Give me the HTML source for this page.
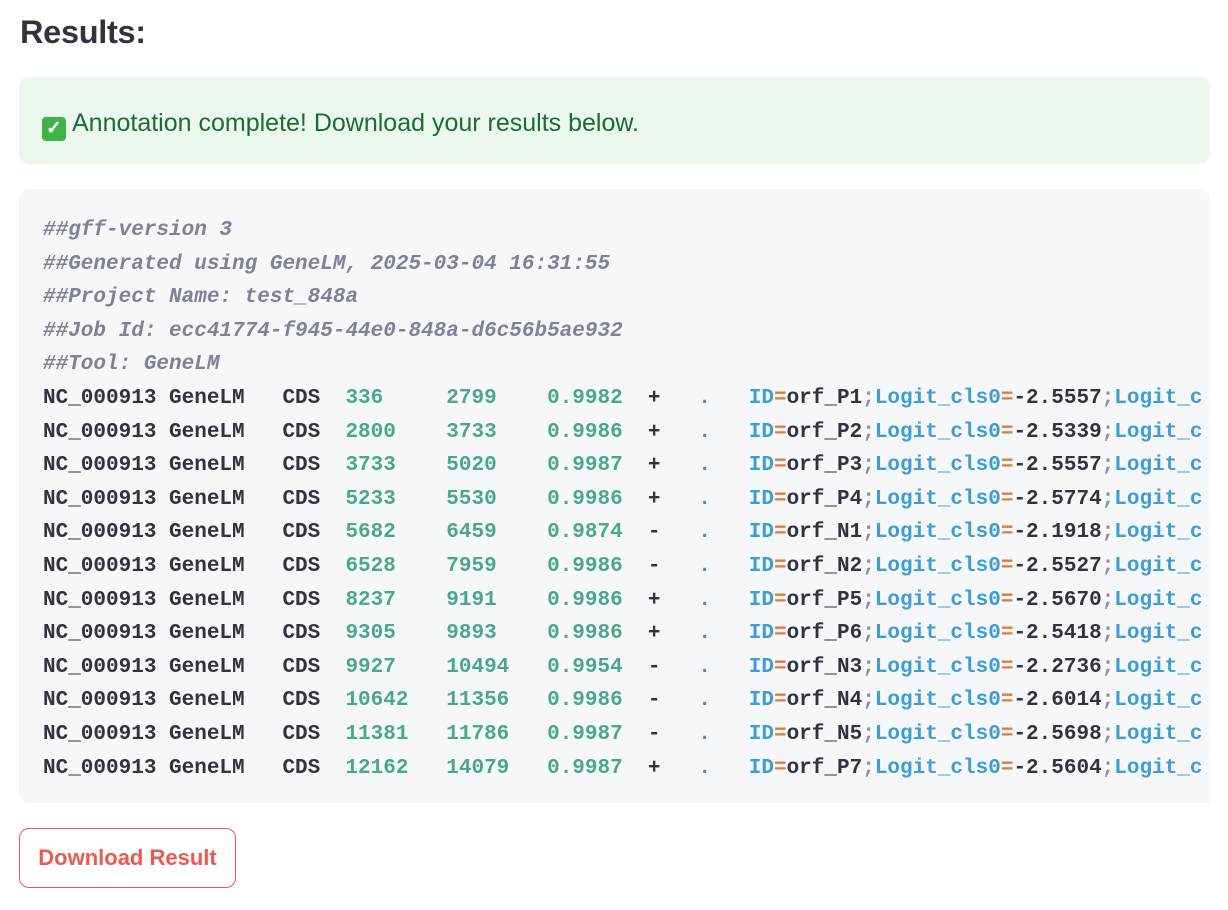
<!DOCTYPE html>
<html><head><meta charset="utf-8"><style>
body{margin:0;background:#fff;width:1228px;height:910px;overflow:hidden;font-family:"Liberation Sans",sans-serif}
h2{position:absolute;left:20px;top:14px;margin:0;font-size:32.5px;font-weight:bold;color:#31333f;letter-spacing:-0.3px}
.ok{position:absolute;left:19px;top:77px;width:1191px;height:87px;background:#ecf7ee;border-radius:10px}
.msg{position:absolute;left:23px;top:32px;font-size:25px;color:#1d6b35;white-space:nowrap;line-height:28px}
.ck{display:inline-block;width:24px;height:24px;background:#3fb34a;border-radius:4px;color:#fff;font-size:19px;line-height:24px;text-align:center;vertical-align:-3px;margin-right:6px;font-weight:bold}
.code{position:absolute;left:19px;top:189px;width:1191px;height:614px;background:#f6f7f9;border-radius:10px 10px 0 10px}
.in{position:absolute;left:24px;top:25px;width:1159px;height:580px;overflow:hidden}
pre{margin:0;font-family:"Liberation Mono",monospace;font-size:21px;line-height:33.6px;font-weight:bold;color:#31333f}
.c{color:#7e8296;font-style:italic}
.n{color:#4aa88a}.k{color:#3d9dd6}.e{color:#e07b39}.s{color:#8a8fa0}.d{color:#3d8fd6}
.btn{position:absolute;left:19px;top:828px;width:215px;height:58px;border:1px solid #ea5a50;border-radius:10px;color:#ea5a50;font-size:22px;font-weight:bold;text-align:center;line-height:58px}
</style></head><body>
<h2>Results:</h2>
<div class="ok"><div class="msg"><span class="ck">✓</span>Annotation complete! Download your results below.</div></div>
<div class="code"><div class="in"><pre><span class="c">##gff-version 3
##Generated using GeneLM, 2025-03-04 16:31:55
##Project Name: test_848a
##Job Id: ecc41774-f945-44e0-848a-d6c56b5ae932
##Tool: GeneLM</span>
NC_000913 GeneLM   CDS  <span class="n">336     2799    0.9982</span>  +   <span class="d">.</span>   <span class="k">ID</span><span class="e">=</span>orf_P1<span class="s">;</span><span class="k">Logit_cls0</span><span class="e">=</span>-2.5557<span class="s">;</span><span class="k">Logit_cls1</span>
NC_000913 GeneLM   CDS  <span class="n">2800    3733    0.9986</span>  +   <span class="d">.</span>   <span class="k">ID</span><span class="e">=</span>orf_P2<span class="s">;</span><span class="k">Logit_cls0</span><span class="e">=</span>-2.5339<span class="s">;</span><span class="k">Logit_cls1</span>
NC_000913 GeneLM   CDS  <span class="n">3733    5020    0.9987</span>  +   <span class="d">.</span>   <span class="k">ID</span><span class="e">=</span>orf_P3<span class="s">;</span><span class="k">Logit_cls0</span><span class="e">=</span>-2.5557<span class="s">;</span><span class="k">Logit_cls1</span>
NC_000913 GeneLM   CDS  <span class="n">5233    5530    0.9986</span>  +   <span class="d">.</span>   <span class="k">ID</span><span class="e">=</span>orf_P4<span class="s">;</span><span class="k">Logit_cls0</span><span class="e">=</span>-2.5774<span class="s">;</span><span class="k">Logit_cls1</span>
NC_000913 GeneLM   CDS  <span class="n">5682    6459    0.9874</span>  -   <span class="d">.</span>   <span class="k">ID</span><span class="e">=</span>orf_N1<span class="s">;</span><span class="k">Logit_cls0</span><span class="e">=</span>-2.1918<span class="s">;</span><span class="k">Logit_cls1</span>
NC_000913 GeneLM   CDS  <span class="n">6528    7959    0.9986</span>  -   <span class="d">.</span>   <span class="k">ID</span><span class="e">=</span>orf_N2<span class="s">;</span><span class="k">Logit_cls0</span><span class="e">=</span>-2.5527<span class="s">;</span><span class="k">Logit_cls1</span>
NC_000913 GeneLM   CDS  <span class="n">8237    9191    0.9986</span>  +   <span class="d">.</span>   <span class="k">ID</span><span class="e">=</span>orf_P5<span class="s">;</span><span class="k">Logit_cls0</span><span class="e">=</span>-2.5670<span class="s">;</span><span class="k">Logit_cls1</span>
NC_000913 GeneLM   CDS  <span class="n">9305    9893    0.9986</span>  +   <span class="d">.</span>   <span class="k">ID</span><span class="e">=</span>orf_P6<span class="s">;</span><span class="k">Logit_cls0</span><span class="e">=</span>-2.5418<span class="s">;</span><span class="k">Logit_cls1</span>
NC_000913 GeneLM   CDS  <span class="n">9927    10494   0.9954</span>  -   <span class="d">.</span>   <span class="k">ID</span><span class="e">=</span>orf_N3<span class="s">;</span><span class="k">Logit_cls0</span><span class="e">=</span>-2.2736<span class="s">;</span><span class="k">Logit_cls1</span>
NC_000913 GeneLM   CDS  <span class="n">10642   11356   0.9986</span>  -   <span class="d">.</span>   <span class="k">ID</span><span class="e">=</span>orf_N4<span class="s">;</span><span class="k">Logit_cls0</span><span class="e">=</span>-2.6014<span class="s">;</span><span class="k">Logit_cls1</span>
NC_000913 GeneLM   CDS  <span class="n">11381   11786   0.9987</span>  -   <span class="d">.</span>   <span class="k">ID</span><span class="e">=</span>orf_N5<span class="s">;</span><span class="k">Logit_cls0</span><span class="e">=</span>-2.5698<span class="s">;</span><span class="k">Logit_cls1</span>
NC_000913 GeneLM   CDS  <span class="n">12162   14079   0.9987</span>  +   <span class="d">.</span>   <span class="k">ID</span><span class="e">=</span>orf_P7<span class="s">;</span><span class="k">Logit_cls0</span><span class="e">=</span>-2.5604<span class="s">;</span><span class="k">Logit_cls1</span></pre></div></div>
<div class="btn">Download Result</div>
</body></html>
